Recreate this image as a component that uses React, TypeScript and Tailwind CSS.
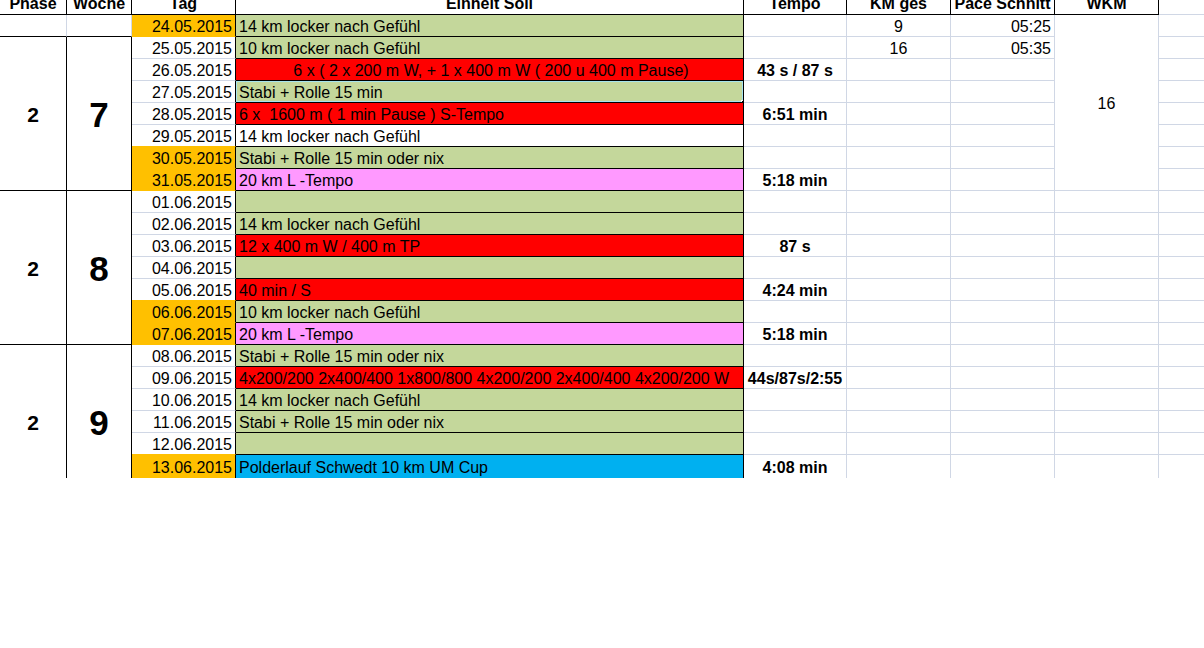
import React from "react";

type Fill = "green" | "red" | "pink" | "blue" | "white";

type Row = {
  date: string;
  weekend?: boolean;
  text: string;
  fill: Fill;
  center?: boolean;
  tempo?: string;
  km?: string;
  pace?: string;
  selected?: boolean;
};

const rows: Row[] = [
  { date: "24.05.2015", weekend: true, text: "14 km locker nach Gefühl", fill: "green", km: "9", pace: "05:25" },
  { date: "25.05.2015", text: "10 km locker nach Gefühl", fill: "green", km: "16", pace: "05:35" },
  { date: "26.05.2015", text: "6 x ( 2 x 200 m W, + 1 x 400 m W ( 200 u 400 m Pause)", fill: "red", center: true, tempo: "43 s / 87 s" },
  { date: "27.05.2015", text: "Stabi + Rolle 15 min", fill: "green", selected: true },
  { date: "28.05.2015", text: "6 x  1600 m ( 1 min Pause ) S-Tempo", fill: "red", tempo: "6:51 min" },
  { date: "29.05.2015", text: "14 km locker nach Gefühl", fill: "white" },
  { date: "30.05.2015", weekend: true, text: "Stabi + Rolle 15 min oder nix", fill: "green" },
  { date: "31.05.2015", weekend: true, text: "20 km L -Tempo", fill: "pink", tempo: "5:18 min" },
  { date: "01.06.2015", text: "", fill: "green" },
  { date: "02.06.2015", text: "14 km locker nach Gefühl", fill: "green" },
  { date: "03.06.2015", text: "12 x 400 m W / 400 m TP", fill: "red", tempo: "87 s" },
  { date: "04.06.2015", text: "", fill: "green" },
  { date: "05.06.2015", text: "40 min / S", fill: "red", tempo: "4:24 min" },
  { date: "06.06.2015", weekend: true, text: "10 km locker nach Gefühl", fill: "green" },
  { date: "07.06.2015", weekend: true, text: "20 km L -Tempo", fill: "pink", tempo: "5:18 min" },
  { date: "08.06.2015", text: "Stabi + Rolle 15 min oder nix", fill: "green" },
  { date: "09.06.2015", text: "4x200/200 2x400/400 1x800/800 4x200/200 2x400/400 4x200/200 W", fill: "red", tempo: "44s/87s/2:55" },
  { date: "10.06.2015", text: "14 km locker nach Gefühl", fill: "green" },
  { date: "11.06.2015", text: "Stabi + Rolle 15 min oder nix", fill: "green" },
  { date: "12.06.2015", text: "", fill: "green" },
  { date: "13.06.2015", weekend: true, text: "Polderlauf Schwedt 10 km UM Cup", fill: "blue", tempo: "4:08 min" },
  // scrolled out of view, only keeps the week block its full height
  { date: "14.06.2015", weekend: true, text: "", fill: "green" },
];

const fillCls: Record<Fill, string> = {
  green: "bg-[#c4d79b]",
  red: "bg-[#ff0000]",
  pink: "bg-[#ff99ff]",
  blue: "bg-[#00b0f0]",
  white: "bg-white",
};

const headers = ["Phase", "Woche", "Tag", "Einheit Soll", "Tempo", "KM ges", "Pace Schnitt", "WKM"];

const cell = "flex items-center overflow-hidden whitespace-pre border-r border-b pt-[2px]";

const App = () => {
  const lastVisible = 20;

  return (
    <div className="min-h-screen bg-white font-['Liberation_Sans',Arial,sans-serif] text-[16px] leading-[18px] text-black">
      <div className="grid h-[478px] grid-cols-[67px_65px_104px_508px_103px_104px_104px_104px_1fr] grid-rows-[15px_repeat(20,22px)_23px_22px] overflow-hidden">
        {/* header row, scrolled so the top of the text is cut */}
        {headers.map((h) => (
          <div
            key={h}
            className="flex items-end justify-center overflow-hidden whitespace-nowrap border-r border-b border-black pb-[1px] font-bold"
          >
            {h}
          </div>
        ))}
        <div className="border-b border-[#d0d7e5]" />

        {rows.map((r, i) => {
          const nextWeekend = rows[i + 1]?.weekend;
          const bottom = i === lastVisible ? "border-b-0" : "border-b";
          const tagBottom = r.weekend || nextWeekend ? "border-b-[#ffc000]" : "border-b-[#d0d7e5]";

          return (
            <React.Fragment key={r.date}>
              {i === 0 && (
                <>
                  <div className="border-r border-b border-r-[#d0d7e5] border-b-black" />
                  <div className="border-r border-b border-r-[#d0d7e5] border-b-black" />
                </>
              )}
              {(i === 1 || i === 8 || i === 15) && (
                <>
                  <div className="row-span-7 flex items-center justify-center border-r border-b border-black pt-[2px] text-[21px] font-bold">
                    2
                  </div>
                  <div className="row-span-7 flex items-center justify-center border-r border-b border-black pt-[2px] text-[35px] leading-[36px] font-bold">
                    {i === 1 ? "7" : i === 8 ? "8" : "9"}
                  </div>
                </>
              )}

              {/* Tag */}
              <div
                className={`${cell} ${bottom} justify-end pr-[3px] border-r-black ${tagBottom} ${
                  r.weekend ? "bg-[#ffc000]" : "bg-white"
                }`}
              >
                {r.date}
              </div>

              {/* Einheit Soll */}
              <div
                className={`relative ${cell} ${bottom} border-black pl-[3px] ${fillCls[r.fill]} ${
                  r.center ? "justify-center" : "justify-start"
                }`}
              >
                {r.text}
                {r.selected && (
                  <>
                    <div className="pointer-events-none absolute -inset-px border border-[#262626] shadow-[inset_0_0_0_1px_#a6e4ee]" />
                    <div className="absolute -right-[3px] -bottom-[3px] h-[5px] w-[5px] border border-white bg-black" />
                  </>
                )}
              </div>

              {/* Tempo */}
              <div className={`${cell} ${bottom} justify-center border-[#d0d7e5] font-bold`}>{r.tempo}</div>

              {/* KM ges */}
              <div className={`${cell} ${bottom} justify-center border-[#d0d7e5]`}>{r.km}</div>

              {/* Pace Schnitt */}
              <div className={`${cell} ${bottom} justify-end pr-[3px] border-[#d0d7e5]`}>{r.pace}</div>

              {/* WKM */}
              {i === 0 && (
                <div className="row-span-8 flex items-center justify-center border-r border-b border-[#d0d7e5] bg-white pt-[2px]">
                  16
                </div>
              )}
              {i >= 8 && <div className={`${cell} ${bottom} border-[#d0d7e5]`} />}

              {/* next column */}
              <div className={`${bottom} border-[#d0d7e5]`} />
            </React.Fragment>
          );
        })}
      </div>
    </div>
  );
};

export default App;
